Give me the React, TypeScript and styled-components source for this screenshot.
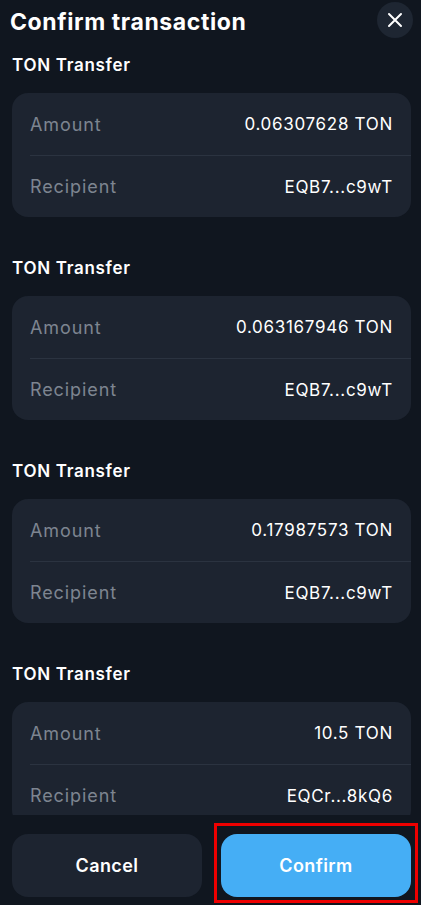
import React from "react";
import styled, { createGlobalStyle } from "styled-components";

const GlobalStyle = createGlobalStyle`
  html, body {
    margin: 0;
    padding: 0;
    background: #10161f;
  }
  * {
    box-sizing: border-box;
  }
`;

const Screen = styled("div")`
  width: 421px;
  height: 905px;
  display: flex;
  flex-direction: column;
  background: #10161f;
  font-family: "Inter", "DejaVu Sans", sans-serif;
  color: #ffffff;
  overflow: hidden;
`;

const Header = styled("div")`
  height: 43px;
  flex: none;
  display: flex;
  align-items: flex-start;
  justify-content: space-between;
  padding: 2px 8px 0 10px;
`;

const Title = styled("h1")`
  margin: 5px 0 0;
  font-size: 23px;
  line-height: 30px;
  font-weight: 700;
  letter-spacing: 0.6px;
`;

const CloseButton = styled("button")`
  width: 36px;
  height: 36px;
  border-radius: 50%;
  border: none;
  background: #1e2632;
  display: flex;
  align-items: center;
  justify-content: center;
  padding: 0;
  cursor: pointer;
`;

const Scroll = styled("div")`
  flex: 1;
  overflow: hidden;
  padding: 10px 10px 0 12px;
  display: flex;
  flex-direction: column;
  gap: 39px;
`;

const Section = styled("section")`
  display: flex;
  flex-direction: column;
  gap: 16px;
  flex: none;
`;

const SectionTitle = styled("h2")`
  margin: 0;
  font-size: 17px;
  line-height: 24px;
  font-weight: 600;
  letter-spacing: 0.7px;
`;

const Card = styled("div")`
  background: #1d2430;
  border-radius: 16px;
  overflow: hidden;
`;

const Row = styled("div")<{ $divider?: boolean }>`
  height: ${p => (p.$divider ? 63 : 61)}px;
  margin-left: 18px;
  padding-right: 18px;
  display: flex;
  align-items: center;
  justify-content: space-between;
  border-bottom: ${p => (p.$divider ? "1px solid #2b3340" : "none")};
`;

const Label = styled("span")`
  color: #7d8590;
  font-size: 18px;
  font-weight: 400;
  letter-spacing: 0.9px;
`;

const Value = styled("span")`
  color: #ffffff;
  font-size: 17px;
  font-weight: 400;
  letter-spacing: 0.7px;
`;

const Footer = styled("div")`
  height: 90px;
  flex: none;
  padding: 19px 10px 8px 12px;
  display: grid;
  grid-template-columns: 190px 190px;
  gap: 19px;
`;

const Button = styled("button")<{ $primary?: boolean }>`
  height: 63px;
  border: none;
  border-radius: 16px;
  background: ${p => (p.$primary ? "#45aef5" : "#1d2430")};
  color: #ffffff;
  font-family: inherit;
  font-size: 18px;
  font-weight: 600;
  letter-spacing: 0.4px;
  cursor: pointer;
`;

const Highlight = styled("div")`
  position: relative;
  display: flex;
  flex-direction: column;

  &::after {
    content: "";
    position: absolute;
    left: -7px;
    right: -7px;
    top: -11px;
    bottom: -6px;
    border: 3px solid #ee0000;
    pointer-events: none;
  }
`;

const transfers = [
  { amount: "0.06307628 TON", recipient: "EQB7...c9wT" },
  { amount: "0.063167946 TON", recipient: "EQB7...c9wT" },
  { amount: "0.17987573 TON", recipient: "EQB7...c9wT" },
  { amount: "10.5 TON", recipient: "EQCr...8kQ6" },
];

export default function App() {
  return (
    <Screen>
      <GlobalStyle />
      <Header>
        <Title>Confirm transaction</Title>
        <CloseButton aria-label="Close">
          <svg width="16" height="16" viewBox="0 0 16 16">
            <path d="M2 2L14 14M14 2L2 14" stroke="#ffffff" strokeWidth="2" strokeLinecap="round" />
          </svg>
        </CloseButton>
      </Header>
      <Scroll>
        {transfers.map((t, i) => (
          <Section key={i}>
            <SectionTitle>TON Transfer</SectionTitle>
            <Card>
              <Row $divider>
                <Label>Amount</Label>
                <Value>{t.amount}</Value>
              </Row>
              <Row>
                <Label>Recipient</Label>
                <Value>{t.recipient}</Value>
              </Row>
            </Card>
          </Section>
        ))}
      </Scroll>
      <Footer>
        <Button>Cancel</Button>
        <Highlight>
          <Button $primary>Confirm</Button>
        </Highlight>
      </Footer>
    </Screen>
  );
}
